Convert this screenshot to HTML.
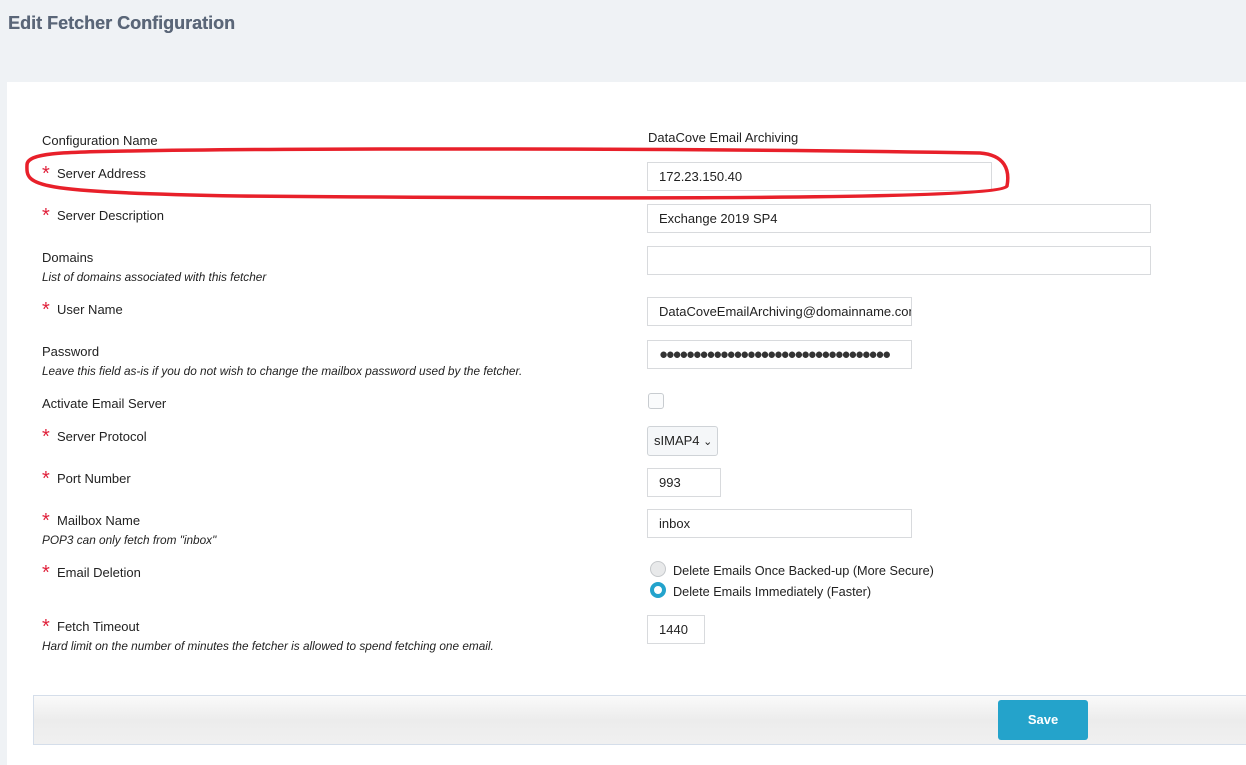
<!DOCTYPE html>
<html><head><meta charset="utf-8"><style>
body{margin:0;width:1246px;height:765px;background:#eff2f5;font-family:"Liberation Sans",sans-serif;position:relative;overflow:hidden;color:#222}
.a{position:absolute}
h1{position:absolute;left:8px;top:13px;margin:0;font-size:18px;color:#5a6678;font-weight:bold;text-shadow:0.3px 0 0 #5a6678}
.panel{position:absolute;left:7px;top:82px;right:0;bottom:0;background:#fff}
.l{position:absolute;left:42px;font-size:13px;color:#222}
.l.r{left:57px}
.st{position:absolute;left:42px;color:#e0203a;font-size:20px;line-height:18px}
.h{position:absolute;left:42px;font-size:11.8px;font-style:italic;color:#222}
.in{position:absolute;left:647px;height:29px;border:1px solid #d8dadd;box-sizing:border-box;font-size:13px;line-height:27px;padding-left:11px;background:#fff;white-space:nowrap;overflow:hidden}
</style></head><body>
<h1>Edit Fetcher Configuration</h1>
<div class="panel"></div>
<div class="l" style="top:133px">Configuration Name</div>
<div class="a" style="left:648px;top:130px;font-size:13px">DataCove Email Archiving</div>

<div class="st" style="top:165px">*</div><div class="l r" style="top:166px">Server Address</div>
<div class="in" style="top:162px;width:345px">172.23.150.40</div>

<div class="st" style="top:207px">*</div><div class="l r" style="top:208px">Server Description</div>
<div class="in" style="top:204px;width:504px">Exchange 2019 SP4</div>

<div class="l" style="top:250px">Domains</div>
<div class="h" style="top:270px">List of domains associated with this fetcher</div>
<div class="in" style="top:246px;width:504px"></div>

<div class="st" style="top:301px">*</div><div class="l r" style="top:302px">User Name</div>
<div class="in" style="top:297px;width:265px">DataCoveEmailArchiving@domainname.com</div>

<div class="l" style="top:344px">Password</div>
<div class="h" style="top:364px">Leave this field as-is if you do not wish to change the mailbox password used by the fetcher.</div>
<div class="in" style="top:340px;width:265px;font-size:15px;letter-spacing:-2.3px;color:#333">●●●●●●●●●●●●●●●●●●●●●●●●●●●●●●●●●●</div>

<div class="l" style="top:396px">Activate Email Server</div>
<div class="a" style="left:648px;top:393px;width:14px;height:14px;border:1px solid #c8ccd0;border-radius:3px;background:#fafbfc"></div>

<div class="st" style="top:428px">*</div><div class="l r" style="top:429px">Server Protocol</div>
<div class="a" style="left:647px;top:426px;width:71px;height:30px;box-sizing:border-box;border:1px solid #cfd3d7;border-radius:3px;background:#f5f7f9;font-size:13px;line-height:28px;padding-left:6px">sIMAP4 <span style="font-size:11px">&#8964;</span></div>

<div class="st" style="top:470px">*</div><div class="l r" style="top:471px">Port Number</div>
<div class="in" style="top:468px;width:74px">993</div>

<div class="st" style="top:512px">*</div><div class="l r" style="top:513px">Mailbox Name</div>
<div class="h" style="top:533px">POP3 can only fetch from "inbox"</div>
<div class="in" style="top:509px;width:265px">inbox</div>

<div class="st" style="top:564px">*</div><div class="l r" style="top:565px">Email Deletion</div>
<div class="a" style="left:650px;top:561px;width:14px;height:14px;border:1px solid #c5c8cb;border-radius:50%;background:#e8e9ea"></div>
<div class="a" style="left:673px;top:564px;font-size:12.7px">Delete Emails Once Backed-up (More Secure)</div>
<div class="a" style="left:650px;top:582px;width:8px;height:8px;border:4px solid #23a3cc;border-radius:50%;background:#fff"></div>
<div class="a" style="left:673px;top:585px;font-size:12.7px">Delete Emails Immediately (Faster)</div>

<div class="st" style="top:618px">*</div><div class="l r" style="top:619px">Fetch Timeout</div>
<div class="h" style="top:639px">Hard limit on the number of minutes the fetcher is allowed to spend fetching one email.</div>
<div class="in" style="top:615px;width:58px">1440</div>

<div class="a" style="left:33px;top:695px;width:1213px;height:50px;box-sizing:border-box;border:1px solid #d5deea;border-right:none;background:linear-gradient(#fafafa,#ececec 50%,#f0f0f0)"></div>
<div class="a" style="left:998px;top:700px;width:90px;height:40px;background:#24a3cb;border-radius:3px;color:#fff;font-weight:bold;font-size:13px;text-align:center;line-height:40px">Save</div>

<svg class="a" style="left:0;top:0" width="1246" height="765"><path d="M130 151 C60 152 27 153 27 165 C26 186 30 192 240 196 C600 199 1000 200 1007 186 C1010 170 1005 155 980 153 C700 148 300 148 130 151 Z" fill="none" stroke="#e8202a" stroke-width="3.5"/></svg>
</body></html>
